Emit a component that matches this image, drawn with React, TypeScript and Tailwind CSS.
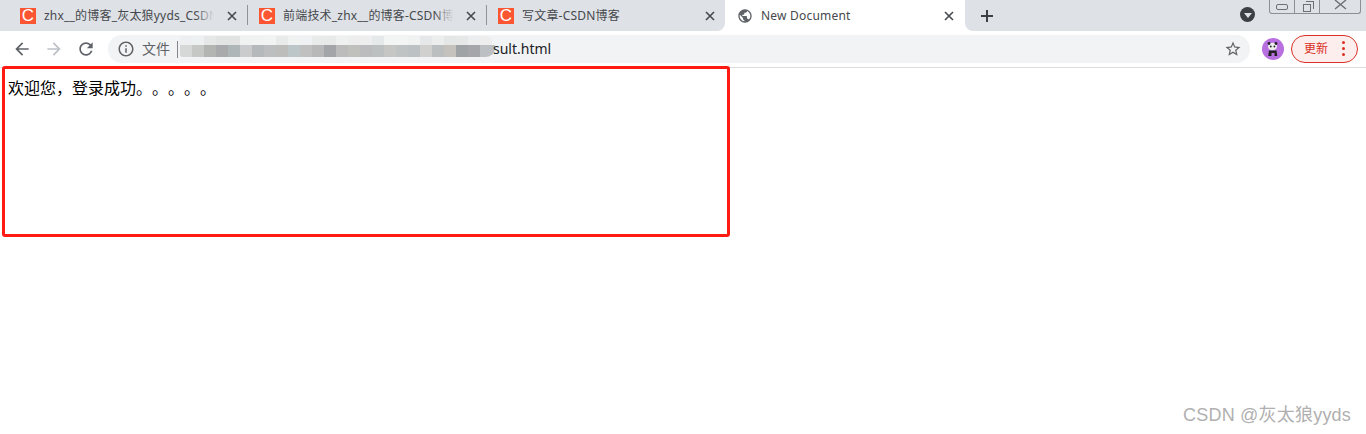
import { ReactNode } from "react";

const FONT = "[font-family:'Noto_Sans','Noto_Sans_CJK_SC',sans-serif]";

// pixelated address text, two rows of 12px blocks
const MOSAIC_TOP = [
  "#edeff0", "#eef1f1", "#e6e8e8", "#e2e4e4", "#e2e4e4", "#f0f2f2", "#f1f3f3", "#f2f3f3", "#e9ebeb",
  "#f1f3f3", "#f0f1f2", "#e9ebeb", "#e8eaea", "#eff0f0", "#ededed", "#eeeeee", "#e6e9ea", "#f3f4f4",
  "#f3f4f4", "#f1f3f3", "#e5e7e8", "#eceeee", "#e5e7e7", "#e6e8e8", "#ecedee", "#eeeeee", "#f1f3f4",
];
const MOSAIC_BOTTOM = [
  "#d6d8d7", "#c6c8c6", "#b3b5b3", "#a8aaac", "#aeb6b8", "#c9cbcd", "#b5b9bc", "#bcbec0", "#bdbdbb",
  "#bcc5c7", "#c0c0c0", "#b8b8b8", "#a3a5a8", "#bcbcbc", "#c0c0bc", "#bcbcbf", "#bcc0c1", "#c6c6c4",
  "#c0c3c4", "#bcc1c3", "#d0d0cf", "#bcbfc0", "#c5c2be", "#a0a3a6", "#a5a6aa", "#bcc0c2", "#bcbfc0",
];

function Favicon() {
  return (
    <span className="flex w-4 h-4 shrink-0 items-center justify-center bg-[#fc5531] text-white text-[17px] leading-none [font-family:'Liberation_Sans',sans-serif]">
      C
    </span>
  );
}

function CloseIcon() {
  return (
    <svg width="10" height="10" viewBox="0 0 10 10" className="shrink-0">
      <path d="M1 1l8 8M9 1l-8 8" stroke="#45484c" strokeWidth="1.6" />
    </svg>
  );
}

function Tab({ title, divider }: { title: string; divider?: boolean }) {
  return (
    <div className="relative flex w-[239px] h-[31px] shrink-0 items-center pl-3 pr-[10px]">
      <Favicon />
      <div className="relative ml-2 mr-2 flex-1 overflow-hidden whitespace-nowrap text-xs tracking-[0.2px] text-[#45484c]">
        {title}
        <div className="absolute inset-y-0 right-0 w-6 bg-gradient-to-r from-transparent to-[#dee1e6] to-80%" />
      </div>
      <CloseIcon />
      {divider && <div className="absolute -right-px top-[5px] h-5 w-px bg-[#8f9398]" />}
    </div>
  );
}

function ToolIcon({ d, color }: { d: string; color: string }) {
  return (
    <svg width="20" height="20" viewBox="0 0 24 24" fill={color}>
      <path d={d} />
    </svg>
  );
}

function WinCell({ children, className }: { children: ReactNode; className: string }) {
  return <div className={`flex shrink-0 items-center justify-center ${className}`}>{children}</div>;
}

function TabStrip() {
  return (
    <div className="flex h-[31px] bg-white">
      <div className="flex rounded-br-lg bg-[#dee1e6] pl-2">
        <Tab title="zhx__的博客_灰太狼yyds_CSDN博客" divider />
        <Tab title="前端技术_zhx__的博客-CSDN博客" divider />
        <Tab title="写文章-CSDN博客" />
      </div>
      <div className="flex w-[240px] h-[31px] shrink-0 items-center bg-white pl-3 pr-[11px]">
        <svg width="16" height="16" viewBox="0 0 24 24" fill="#5f6368" className="shrink-0">
          <path d="M12 2C6.48 2 2 6.48 2 12s4.48 10 10 10 10-4.48 10-10S17.52 2 12 2zm-1 17.93c-3.95-.49-7-3.85-7-7.93 0-.62.08-1.21.21-1.79L9 15v1c0 1.1.9 2 2 2v1.93zm6.9-2.54c-.26-.81-1-1.39-1.9-1.39h-1v-3c0-.55-.45-1-1-1H8v-2h2c.55 0 1-.45 1-1V7h2c1.1 0 2-.9 2-2v-.41c2.93 1.19 5 4.06 5 7.41 0 2.08-.8 3.97-2.1 5.39z" />
        </svg>
        <span className="ml-[8px] flex-1 text-xs tracking-[0.2px] text-[#45484c]">New Document</span>
        <CloseIcon />
      </div>
      <div className="flex flex-1 rounded-bl-lg bg-[#dee1e6] pl-[15px]">
        <div className="flex items-center">
          <svg width="14" height="14" viewBox="0 0 14 14">
            <path d="M7 1v12M1 7h12" stroke="#3c4043" strokeWidth="2" />
          </svg>
        </div>
        <div className="ml-auto flex items-start">
          <div className="mt-[7px] mr-[14px] flex h-[15px] w-[15px] items-center justify-center rounded-full bg-[#3c4043]">
            <div className="mt-px border-x-[4px] border-t-[5px] border-x-transparent border-t-[#dee1e6]" />
          </div>
          <div className="mr-[5px] flex h-[14px] w-[92px] rounded-b-[3px] border border-t-0 border-[#8c8f93]">
            <WinCell className="w-[25px] border-r border-[#8c8f93]">
              <div className="h-[6px] w-3 rounded-[2px] border border-[#6d7074]" />
            </WinCell>
            <WinCell className="w-[25px] border-r border-[#8c8f93]">
              <div className="relative mt-[2px] h-[8px] w-[8px] border border-[#6d7074]">
                <div className="absolute -right-[4px] -top-[4px] h-[8px] w-[8px] border-r border-t border-[#6d7074]" />
              </div>
            </WinCell>
            <WinCell className="flex-1">
              <svg width="13" height="10" viewBox="0 0 13 10" className="-mt-1">
                <path d="M1 0l11 9M12 0L1 9" stroke="#6d7074" strokeWidth="1.4" fill="none" />
              </svg>
            </WinCell>
          </div>
        </div>
      </div>
    </div>
  );
}

function Toolbar() {
  return (
    <div className="flex h-[37px] items-center border-b border-[#dadce0] bg-white pb-px">
      <div className="ml-3 flex w-[84px] items-center gap-3">
        <ToolIcon color="#5f6368" d="M20 11H7.83l5.59-5.59L12 4l-8 8 8 8 1.41-1.41L7.83 13H20v-2z" />
        <ToolIcon color="#bdc1c6" d="M12 4l-1.41 1.41L16.17 11H4v2h12.17l-5.58 5.59L12 20l8-8z" />
        <ToolIcon color="#5f6368" d="M17.65 6.35C16.2 4.9 14.21 4 12 4c-4.42 0-7.99 3.58-7.99 8s3.57 8 7.99 8c3.73 0 6.84-2.55 7.73-6h-2.08c-.82 2.33-3.04 4-5.65 4-3.31 0-6-2.69-6-6s2.69-6 6-6c1.66 0 3.14.69 4.22 1.78L13 11h7V4l-2.35 2.35z" />
      </div>
      <div className="ml-3 flex h-7 w-[1142px] items-center rounded-full bg-[#f1f3f4] pl-[9px] pr-2">
        <svg width="18" height="18" viewBox="0 0 24 24" fill="#5f6368" className="shrink-0">
          <path d="M11 7h2v2h-2zm0 4h2v6h-2zm1-9C6.48 2 2 6.48 2 12s4.48 10 10 10 10-4.48 10-10S17.52 2 12 2zm0 18c-4.41 0-8-3.59-8-8s3.59-8 8-8 8 3.59 8 8-3.59 8-8 8z" />
        </svg>
        <span className="ml-[7px] text-sm text-[#5f6368]">文件</span>
        <div className="ml-[7px] mr-[2px] mt-[2px] h-[17px] w-px bg-[#80868b]" />
        <div className="mb-[5px] flex h-[21px] w-[315px] flex-col overflow-hidden rounded-l-[3px] rounded-r-[9px]">
          <div className="flex h-[9px]">
            {MOSAIC_TOP.map((c, i) => (
              <div key={i} className="h-full w-3 shrink-0" style={{ backgroundColor: c }} />
            ))}
          </div>
          <div className="flex h-3">
            {MOSAIC_BOTTOM.map((c, i) => (
              <div key={i} className="h-full w-3 shrink-0" style={{ backgroundColor: c }} />
            ))}
          </div>
        </div>
        <span className="-ml-[2px] text-sm text-[#202124]">sult.html</span>
        <svg width="18" height="18" viewBox="0 0 24 24" fill="#5f6368" className="ml-auto shrink-0">
          <path d="M22 9.24l-7.19-.62L12 2 9.19 8.63 2 9.24l5.46 4.73L5.82 21 12 17.27 18.18 21l-1.63-7.03L22 9.24zM12 15.4l-3.76 2.27 1-4.28-3.32-2.88 4.38-.38L12 6.1l1.71 4.04 4.38.38-3.32 2.88 1 4.28L12 15.4z" />
        </svg>
      </div>
      <svg width="22" height="22" viewBox="0 0 22 22" className="ml-3 shrink-0">
        <circle cx="11" cy="11" r="11" fill="#b86fe0" />
        <ellipse cx="10.5" cy="8.5" rx="4.5" ry="3.8" fill="#eeeeee" />
        <circle cx="7" cy="5.5" r="1.4" fill="#222" />
        <circle cx="14" cy="5.5" r="1.4" fill="#222" />
        <circle cx="8.8" cy="8.5" r="0.9" fill="#222" />
        <circle cx="12.4" cy="8.5" r="0.9" fill="#222" />
        <path d="M7 12.5h7.5l.8 5.5h-2.8v-3h-3v3H6.2z" fill="#222" />
      </svg>
      <div className="ml-[7px] flex h-[28px] w-[67px] items-center rounded-full border border-[#d93025] bg-[#fdeeee] pl-3 pr-3">
        <span className="text-xs text-[#d93025]">更新</span>
        <div className="ml-auto flex flex-col gap-[3px]">
          <div className="h-[3px] w-[3px] rounded-full bg-[#d93025]" />
          <div className="h-[3px] w-[3px] rounded-full bg-[#d93025]" />
          <div className="h-[3px] w-[3px] rounded-full bg-[#d93025]" />
        </div>
      </div>
    </div>
  );
}

export default function App() {
  return (
    <div className={`relative h-[434px] w-[1366px] overflow-hidden bg-white ${FONT}`}>
      <TabStrip />
      <Toolbar />
      <div className="px-2 pt-[8px] text-base leading-[24px] text-black [text-spacing-trim:space-all] [font-feature-settings:'palt'_0]">
        欢迎您，登录成功。。。。。
      </div>

      {/* red annotation box */}
      <div className="absolute left-[2px] top-[66px] h-[171px] w-[728px] rounded-[3px] border-[3px] border-[#ff1a12]" />

      {/* watermark */}
      <div className="absolute bottom-[7px] right-[15px] text-[18px] leading-[24px] tracking-[0.2px] text-[#b0b0b0] [font-family:'Liberation_Sans','Noto_Sans_CJK_SC',sans-serif]">
        CSDN @灰太狼yyds
      </div>
    </div>
  );
}
